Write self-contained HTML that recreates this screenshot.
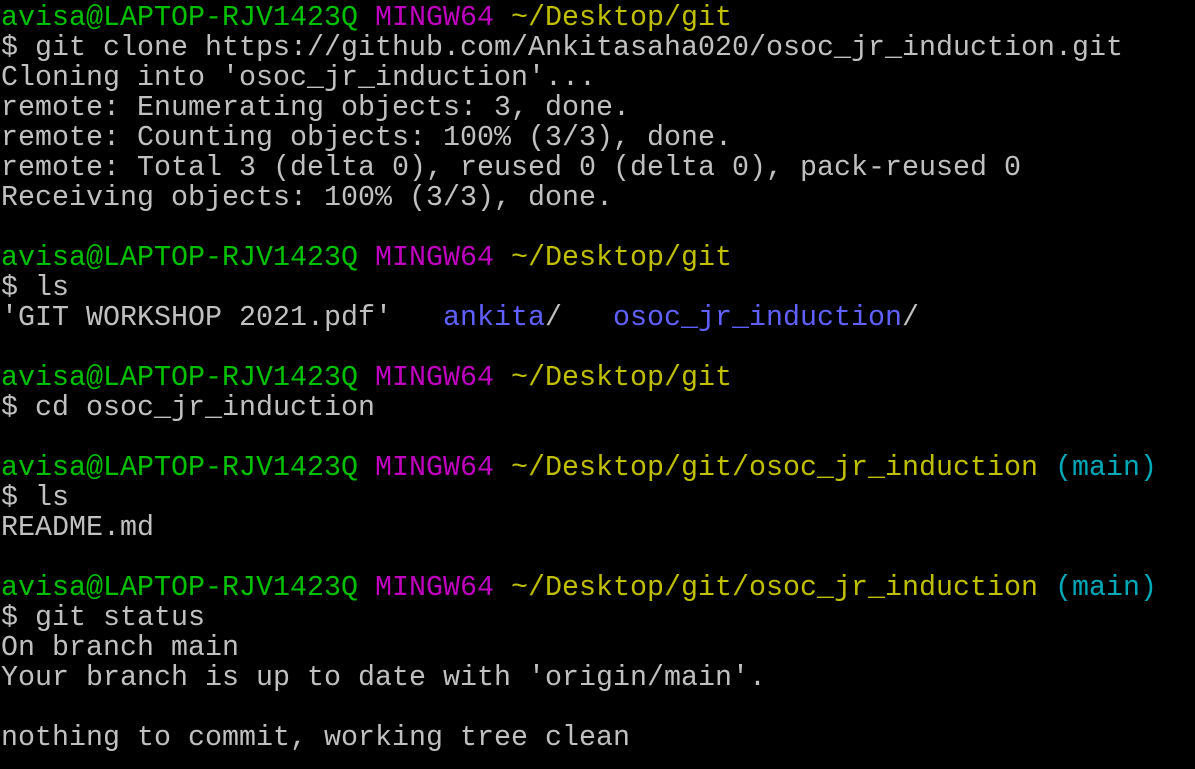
<!DOCTYPE html>
<html><head><style>
html,body{margin:0;padding:0;background:#000;width:1195px;height:769px;overflow:hidden}
pre{margin:0;padding:3px 0 0 1px;font-family:"Liberation Mono",monospace;font-size:28.33px;line-height:30px;color:#c0c0c0;white-space:pre}
.g{color:#00bf00}.m{color:#bf00bf}.y{color:#bfbf00}.c{color:#00a8b8}.b{color:#6060ff}
</style></head><body><pre><span class="g">avisa@LAPTOP-RJV1423Q</span> <span class="m">MINGW64</span> <span class="y">~/Desktop/git</span>
$ git clone https://github.com/Ankitasaha020/osoc_jr_induction.git
Cloning into 'osoc_jr_induction'...
remote: Enumerating objects: 3, done.
remote: Counting objects: 100% (3/3), done.
remote: Total 3 (delta 0), reused 0 (delta 0), pack-reused 0
Receiving objects: 100% (3/3), done.

<span class="g">avisa@LAPTOP-RJV1423Q</span> <span class="m">MINGW64</span> <span class="y">~/Desktop/git</span>
$ ls
'GIT WORKSHOP 2021.pdf'   <span class="b">ankita</span>/   <span class="b">osoc_jr_induction</span>/

<span class="g">avisa@LAPTOP-RJV1423Q</span> <span class="m">MINGW64</span> <span class="y">~/Desktop/git</span>
$ cd osoc_jr_induction

<span class="g">avisa@LAPTOP-RJV1423Q</span> <span class="m">MINGW64</span> <span class="y">~/Desktop/git/osoc_jr_induction</span> <span class="c">(main)</span>
$ ls
README.md

<span class="g">avisa@LAPTOP-RJV1423Q</span> <span class="m">MINGW64</span> <span class="y">~/Desktop/git/osoc_jr_induction</span> <span class="c">(main)</span>
$ git status
On branch main
Your branch is up to date with 'origin/main'.

nothing to commit, working tree clean
</pre></body></html>
